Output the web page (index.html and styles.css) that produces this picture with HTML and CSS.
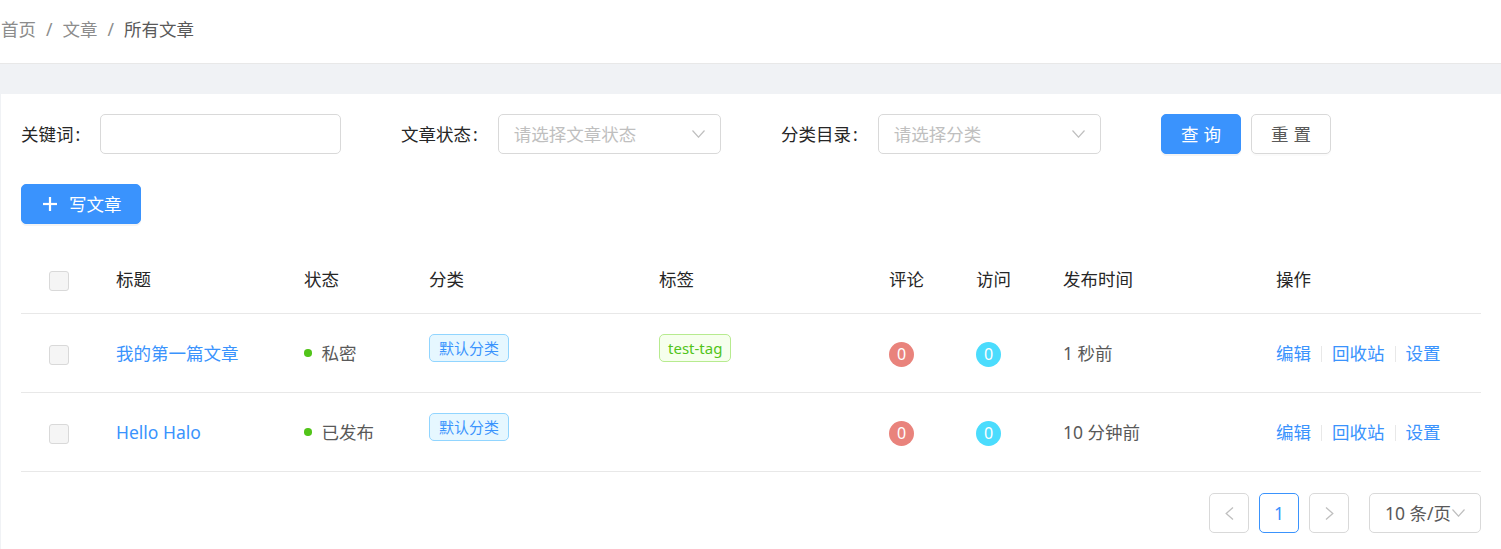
FILE: index.html
```html
<!DOCTYPE html>
<html lang="zh-CN">
  <head>
    <meta charset="UTF-8" />
    <meta name="viewport" content="width=device-width, initial-scale=1.0" />
    <title>所有文章</title>
    <link rel="stylesheet" href="styles.css">
  </head>
  <body>
    <header class="page-header">
      <nav class="breadcrumb"><a class="crumb">首页</a><span class="sep">/</span><a class="crumb">文章</a><span class="sep">/</span><span class="crumb current">所有文章</span></nav>
    </header>

    <main class="page-content">
      <section class="card">
        <form class="filter">
          <div class="filter-item">
            <label class="filter-label">关键词</label>
            <input class="input" type="text" />
          </div>
          <div class="filter-item">
            <label class="filter-label">文章状态</label>
            <div class="select">
              <span class="placeholder">请选择文章状态</span>
              <svg class="select-arrow" width="13" height="8" viewBox="0 0 13 8"><polyline points="0.5,0.5 6.5,7.2 12.5,0.5" fill="none" stroke="#bfbfbf" stroke-width="1.2"/></svg>
            </div>
          </div>
          <div class="filter-item">
            <label class="filter-label">分类目录</label>
            <div class="select">
              <span class="placeholder">请选择分类</span>
              <svg class="select-arrow" width="13" height="8" viewBox="0 0 13 8"><polyline points="0.5,0.5 6.5,7.2 12.5,0.5" fill="none" stroke="#bfbfbf" stroke-width="1.2"/></svg>
            </div>
          </div>
          <div class="filter-actions">
            <button type="button" class="btn btn-primary btn-two"><span>查询</span></button>
            <button type="button" class="btn btn-two"><span>重置</span></button>
          </div>
        </form>

        <div class="toolbar">
          <button type="button" class="btn btn-primary btn-write">
            <svg class="icon-plus" width="14" height="14" viewBox="0 0 14 14"><rect x="5.9" y="0" width="2.2" height="14" fill="#fff"/><rect x="0" y="5.9" width="14" height="2.2" fill="#fff"/></svg>
            <span>写文章</span>
          </button>
        </div>

        <table class="post-table">
          <colgroup>
            <col class="col-check" />
            <col class="col-title" />
            <col class="col-status" />
            <col class="col-category" />
            <col class="col-tags" />
            <col class="col-count" />
            <col class="col-count" />
            <col class="col-time" />
            <col class="col-action" />
          </colgroup>
          <thead>
            <tr>
              <th class="cell-check"><span class="checkbox"></span></th>
              <th>标题</th>
              <th>状态</th>
              <th>分类</th>
              <th>标签</th>
              <th>评论</th>
              <th>访问</th>
              <th>发布时间</th>
              <th>操作</th>
            </tr>
          </thead>
          <tbody>
            <tr>
              <td class="cell-check"><span class="checkbox"></span></td>
              <td><a class="link">我的第一篇文章</a></td>
              <td><span class="dot"></span>私密</td>
              <td><span class="tag tag-blue">默认分类</span></td>
              <td><span class="tag tag-green">test-tag</span></td>
              <td><span class="count count-red">0</span></td>
              <td><span class="count count-cyan">0</span></td>
              <td>1 秒前</td>
              <td>
                <a class="link">编辑</a><span class="divider"></span><a class="link">回收站</a><span class="divider"></span><a class="link">设置</a>
              </td>
            </tr>
            <tr>
              <td class="cell-check"><span class="checkbox"></span></td>
              <td><a class="link">Hello Halo</a></td>
              <td><span class="dot"></span>已发布</td>
              <td><span class="tag tag-blue">默认分类</span></td>
              <td></td>
              <td><span class="count count-red">0</span></td>
              <td><span class="count count-cyan">0</span></td>
              <td>10 分钟前</td>
              <td>
                <a class="link">编辑</a><span class="divider"></span><a class="link">回收站</a><span class="divider"></span><a class="link">设置</a>
              </td>
            </tr>
          </tbody>
        </table>

        <div class="pagination">
          <span class="page-item disabled">
            <svg width="9" height="13" viewBox="0 0 9 13"><polyline points="8,0.5 1.2,6.5 8,12.5" fill="none" stroke="#bfbfbf" stroke-width="1.3"/></svg>
          </span>
          <span class="page-item active">1</span>
          <span class="page-item disabled">
            <svg width="9" height="13" viewBox="0 0 9 13"><polyline points="1,0.5 7.8,6.5 1,12.5" fill="none" stroke="#bfbfbf" stroke-width="1.3"/></svg>
          </span>
          <span class="page-size">
            <span>10 条/页</span>
            <svg width="13" height="8" viewBox="0 0 13 8"><polyline points="0.5,0.5 6.5,7.2 12.5,0.5" fill="none" stroke="#bfbfbf" stroke-width="1.2"/></svg>
          </span>
        </div>
      </section>
    </main>
  </body>
</html>
```

FILE: styles.css
```css
* {
  box-sizing: border-box;
}
body {
  margin: 0;
  background-color: #f0f2f5;
  font-family: "Noto Sans", "Noto Sans CJK SC", sans-serif;
  font-size: 17.5px;
  line-height: 27px;
  color: #595959;
}
.page-header {
  height: 64px;
  background-color: #fff;
  border-bottom: 1px solid #e8e8e8;
  display: flex;
  align-items: center;
  padding: 0 0 4px 1px;
}
.breadcrumb .crumb {
  color: #8c8c8c;
}
.breadcrumb .current {
  color: #595959;
}
.breadcrumb .sep {
  color: #8c8c8c;
  margin: 0 10px;
}
.page-content {
  padding: 30px 0 0 1px;
}
.card {
  background-color: #fff;
  padding: 20px 20px 30px;
  min-height: 480px;
}
.filter {
  display: grid;
  grid-template-columns: repeat(4, 1fr);
  column-gap: 60px;
  margin: 0;
}
.filter-item {
  display: flex;
  align-items: center;
  height: 40px;
}
.filter-label {
  color: #262626;
  white-space: nowrap;
  margin-right: 20px;
}
.filter-label::after {
  content: ":";
  margin-left: 2px;
}
.input,
.select {
  flex: 1;
  height: 40px;
  border: 1px solid #d9d9d9;
  border-radius: 5px;
  background-color: #fff;
}
.select {
  display: flex;
  align-items: center;
  justify-content: space-between;
  padding: 0 15px 0 15px;
}
.placeholder {
  color: #bfbfbf;
}
.filter-actions {
  display: flex;
  gap: 10px;
}
.btn {
  height: 40px;
  border: 1px solid #d9d9d9;
  border-radius: 5px;
  background-color: #fff;
  color: #595959;
  font-family: inherit;
  font-size: 17.5px;
  line-height: 27px;
  padding: 0 18px;
  box-shadow: 0 2px 0 rgba(0, 0, 0, 0.015);
  display: inline-flex;
  align-items: center;
  justify-content: center;
}
.btn-primary {
  background-color: #3a93fd;
  border-color: #3a93fd;
  color: #fff;
  box-shadow: 0 2px 0 rgba(0, 0, 0, 0.045);
}
.btn-two {
  width: 80px;
}
.btn-two span {
  letter-spacing: 0.3em;
  margin-right: -0.3em;
}
.toolbar {
  margin-top: 30px;
  margin-bottom: 22px;
}
.btn-write {
  padding: 0 18px 0 21px;
}
.icon-plus {
  margin-right: 12px;
}
.post-table {
  width: 100%;
  table-layout: fixed;
  border-collapse: collapse;
}
.col-check { width: 75px; }
.col-title { width: 188px; }
.col-status { width: 125px; }
.col-category { width: 230px; }
.col-tags { width: 230px; }
.col-count { width: 87px; }
.col-time { width: 213px; }
.col-action { width: 225px; }
.post-table th,
.post-table td {
  padding: 20px;
  text-align: left;
  border-bottom: 1px solid #e8e8e8;
  vertical-align: middle;
  white-space: nowrap;
}
.post-table th {
  font-weight: normal;
  color: #262626;
}
.post-table .cell-check {
  text-align: center;
  padding: 0;
}
.checkbox {
  display: inline-block;
  width: 20px;
  height: 20px;
  border: 1px solid #d9d9d9;
  border-radius: 3px;
  background-color: #f5f5f5;
  vertical-align: middle;
}
.link {
  color: #3a93fd;
  cursor: pointer;
}
.dot {
  display: inline-block;
  width: 7.5px;
  height: 7.5px;
  border-radius: 50%;
  background-color: #52c41a;
  margin-right: 10px;
  vertical-align: middle;
  position: relative;
  top: -2px;
}
.tag {
  display: inline-block;
  vertical-align: top;
  height: 28px;
  line-height: 26px;
  padding: 0 9px;
  font-size: 15px;
  border: 1px solid;
  border-radius: 5px;
  margin-bottom: 10px;
}
.tag-blue {
  color: #3a93fd;
  background-color: #e6f7ff;
  border-color: #91d5ff;
}
.tag-green {
  color: #52c41a;
  background-color: #f6ffed;
  border-color: #b7eb8f;
  padding: 0 8px;
}
.count {
  display: inline-block;
  width: 25px;
  height: 25px;
  border-radius: 50%;
  color: #fff;
  font-size: 16px;
  line-height: 25px;
  text-align: center;
  vertical-align: middle;
  box-shadow: 0 0 0 1px #fff;
}
.count-red {
  background-color: #e9837c;
}
.count-cyan {
  background-color: #4bdcfd;
}
.divider {
  display: inline-block;
  width: 1px;
  height: 16px;
  margin: 0 10px;
  background-color: #e8e8e8;
  vertical-align: middle;
  position: relative;
  top: -1px;
}
.pagination {
  display: flex;
  justify-content: flex-end;
  gap: 10px;
  margin-top: 21px;
}
.page-item {
  width: 40px;
  height: 40px;
  border: 1px solid #d9d9d9;
  border-radius: 5px;
  display: flex;
  align-items: center;
  justify-content: center;
  color: #595959;
}
.page-item.active {
  border-color: #3a93fd;
  color: #3a93fd;
}
.page-size {
  width: 112px;
  height: 40px;
  margin-left: 10px;
  border: 1px solid #d9d9d9;
  border-radius: 5px;
  display: flex;
  align-items: center;
  justify-content: space-between;
  padding: 0 15px 0 15px;
  color: #595959;
}
```
